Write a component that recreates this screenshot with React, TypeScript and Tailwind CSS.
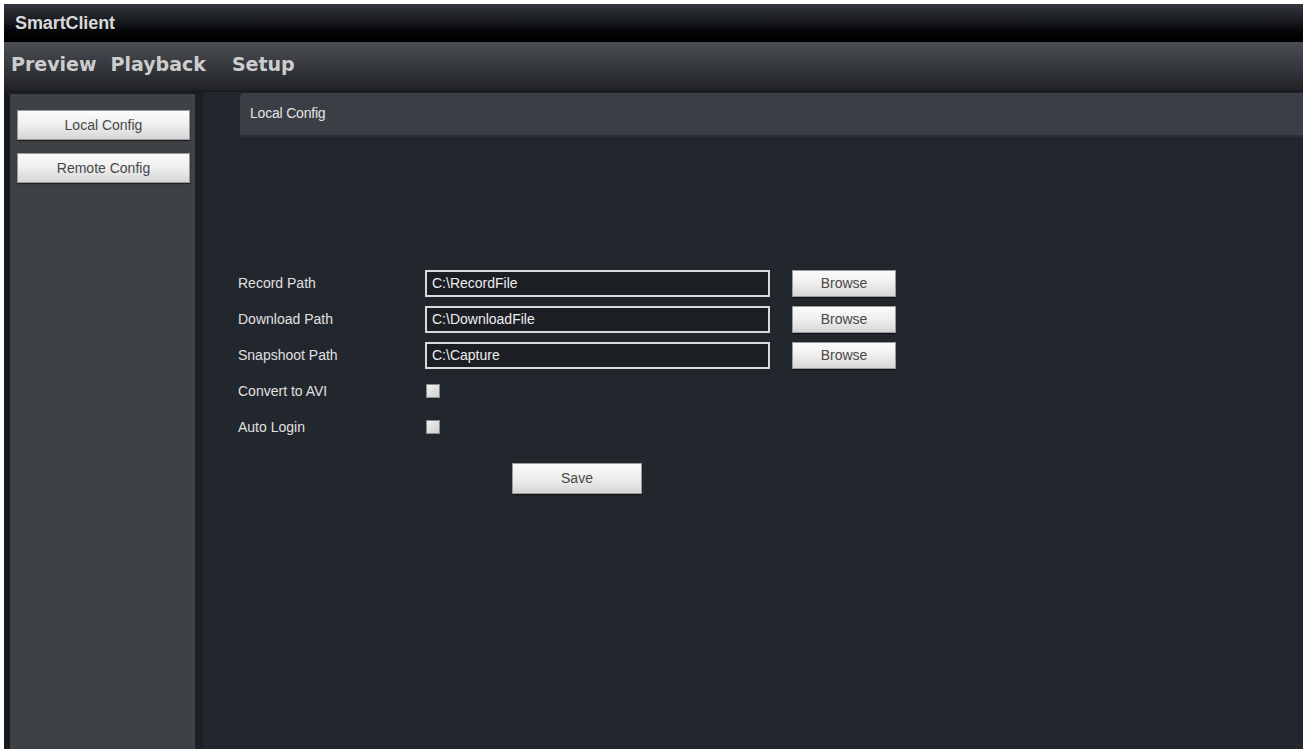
import React from "react";

const FONT = { fontFamily: '"Liberation Sans", Arial, sans-serif' };

const MENU = ["Preview", "Playback", "Setup"];

const PATHS = [
  { label: "Record Path", value: "C:\\RecordFile" },
  { label: "Download Path", value: "C:\\DownloadFile" },
  { label: "Snapshoot Path", value: "C:\\Capture" },
];

const LightButton = ({ children, className = "" }: { children: React.ReactNode; className?: string }) => (
  <button
    className={`bg-gradient-to-b from-[#fbfbfb] via-[#eeeeee] to-[#d6d6d6] border border-[#9a9a9a] text-[14px] text-[#484848] shadow-[0_1px_1px_rgba(0,0,0,0.5)] ${className}`}
  >
    {children}
  </button>
);

const Checkbox = () => (
  <div className="w-[14px] h-[14px] bg-gradient-to-br from-[#f2f2f2] to-[#cfcfcf] border border-[#8a8a8a]" />
);

export default function App() {
  return (
    <div className="w-[1306px] h-[753px] bg-white pl-[4px] pt-[4px] pr-[3px] pb-[4px]" style={FONT}>
      <div className="w-full h-full flex flex-col bg-[#22272e]">
        {/* window title */}
        <div className="h-[38px] shrink-0 flex items-center pl-[11px] bg-gradient-to-b from-[#34373d] via-[#15171c] to-[#000000]">
          <span className="text-[18px] font-bold text-[#d8d8d8] tracking-[-0.1px]">SmartClient</span>
        </div>

        {/* main menu */}
        <div className="h-[50px] shrink-0 flex items-center pl-[7px] pb-[5px] bg-gradient-to-b from-[#4a4d53] via-[#35383d] to-[#1f2125] border-b border-[#14161a]">
          {MENU.map((item, i) => (
            <span
              key={item}
              className={`text-[19px] font-bold text-[#cdcdcd] ${i === 1 ? "ml-[14px]" : i === 2 ? "ml-[26px]" : ""}`}
              style={{ fontFamily: '"DejaVu Sans", Verdana, sans-serif' }}
            >
              {item}
            </span>
          ))}
        </div>

        <div className="flex-1 flex min-h-0">
          {/* setup sidebar */}
          <div className="w-[199px] shrink-0 flex pt-[2px] bg-[#1a1e22]">
            <div className="w-[6px] bg-[#181c1f]" />
            <div className="w-[185px] bg-[#3e4246] flex flex-col gap-[13px] pt-[16px] pl-[7px]">
              <LightButton className="w-[173px] h-[30px]">Local Config</LightButton>
              <LightButton className="w-[173px] h-[30px]">Remote Config</LightButton>
            </div>
            <div className="w-[8px] bg-[#1c2126]" />
          </div>

          {/* config page */}
          <div className="flex-1 flex flex-col pt-[1px] pl-[37px]">
            <div className="h-[44px] bg-[#3a3f45] rounded-tl-[4px] border-b-2 border-[#2a2f35] pl-[10px] pt-[8px]">
              <span className="text-[14px] text-[#e4e4e4] tracking-[-0.2px]">Local Config</span>
            </div>

            <div className="mt-[128px] -ml-[2px] flex flex-col">
              {PATHS.map((p) => (
                <div key={p.label} className="h-[36px] flex items-center">
                  <span className="w-[187px] text-[14px] text-[#e0e0e0]">{p.label}</span>
                  <div className="w-[345px] h-[27px] border-2 border-[#d9d9d9] bg-[#1b1f24] flex items-center pl-[5px]">
                    <span className="text-[14px] text-[#eeeeee]">{p.value}</span>
                  </div>
                  <LightButton className="ml-[22px] w-[104px] h-[27px]">Browse</LightButton>
                </div>
              ))}
              {["Convert to AVI", "Auto Login"].map((label) => (
                <div key={label} className="h-[36px] flex items-center">
                  <span className="w-[188px] text-[14px] text-[#e0e0e0]">{label}</span>
                  <Checkbox />
                </div>
              ))}
              <div className="mt-[18px] pl-[274px]">
                <LightButton className="w-[130px] h-[31px]">Save</LightButton>
              </div>
            </div>
          </div>
        </div>
      </div>
    </div>
  );
}
